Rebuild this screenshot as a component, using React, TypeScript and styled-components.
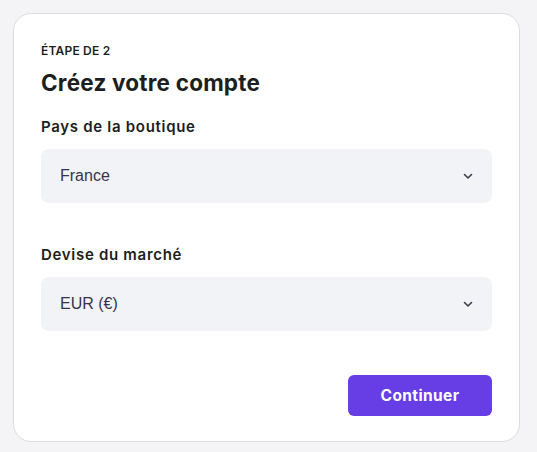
import React from "react";
import styled, { createGlobalStyle } from "styled-components";

const Global = createGlobalStyle`
  html, body { margin: 0; padding: 0; background: #f4f4f7; }
  body { font-family: "Inter", "Liberation Sans", sans-serif; -webkit-font-smoothing: antialiased; }
  * { box-sizing: border-box; }
`;

const Page = styled.div`
  padding: 13px 17px 11px 13px;
`;

const Card = styled.div`
  background: #fff;
  border: 1px solid #dadce0;
  border-radius: 18px;
  padding: 29px 27px 25px 27px;
  display: flex;
  flex-direction: column;
`;

const Step = styled.div`
  font-size: 12px;
  font-weight: 600;
  color: #1d1e20;
  line-height: 16px;
  letter-spacing: 0.2px;
`;

const Title = styled.h1`
  margin: 10px 0 0 0;
  font-size: 22.5px;
  font-weight: 700;
  color: #1d1e20;
  line-height: 28px;
  letter-spacing: 0.2px;
`;

const Field = styled.div<{ $mt: number }>`
  display: flex;
  flex-direction: column;
  gap: 12px;
  margin-top: ${(p) => p.$mt}px;
`;

const Label = styled.label`
  font-size: 15px;
  font-weight: 600;
  color: #1d1e20;
  line-height: 20px;
  letter-spacing: 0.7px;
`;

const Select = styled.div`
  height: 54px;
  background: #f2f3f6;
  border-radius: 8px;
  display: flex;
  align-items: center;
  justify-content: space-between;
  padding: 0 19px 0 19px;
  font-family: "Liberation Sans", Arial, sans-serif;
  font-size: 16px;
  color: #36344d;
`;

const Footer = styled.div`
  display: flex;
  justify-content: flex-end;
  margin-top: 44px;
`;

const Button = styled.button`
  width: 144px;
  height: 41px;
  border: none;
  border-radius: 6px;
  background: #673de6;
  color: #fff;
  font-family: "Inter", "Liberation Sans", sans-serif;
  font-size: 15.5px;
  font-weight: 700;
  letter-spacing: 0.4px;
  cursor: pointer;
`;

const Chevron = () => (
  <svg width="10" height="8" viewBox="0 0 10 8" fill="none">
    <path d="M1.5 2.5 L5 6 L8.5 2.5" stroke="#3b3d4a" strokeWidth="1.6" strokeLinecap="round" strokeLinejoin="round" />
  </svg>
);

export default function App() {
  return (
    <>
      <Global />
      <Page>
        <Card>
          <Step>ÉTAPE DE 2</Step>
          <Title>Créez votre compte</Title>
          <Field $mt={20}>
            <Label>Pays de la boutique</Label>
            <Select>
              <span>France</span>
              <Chevron />
            </Select>
          </Field>
          <Field $mt={42}>
            <Label>Devise du marché</Label>
            <Select>
              <span>EUR (€)</span>
              <Chevron />
            </Select>
          </Field>
          <Footer>
            <Button>Continuer</Button>
          </Footer>
        </Card>
      </Page>
    </>
  );
}
